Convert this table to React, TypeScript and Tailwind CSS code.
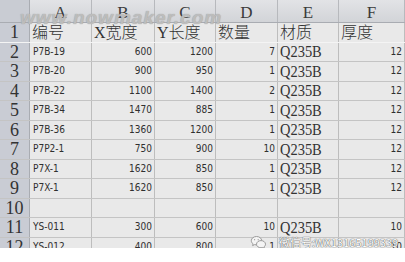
const rows: string[][] = [
  ['P7B-19', '600', '1200', '7', 'Q235B', '12'],
  ['P7B-20', '900', '950', '1', 'Q235B', '12'],
  ['P7B-22', '1100', '1400', '2', 'Q235B', '12'],
  ['P7B-34', '1470', '885', '1', 'Q235B', '12'],
  ['P7B-36', '1360', '1200', '1', 'Q235B', '12'],
  ['P7P2-1', '750', '900', '10', 'Q235B', '12'],
  ['P7X-1', '1620', '850', '1', 'Q235B', '12'],
  ['P7X-1', '1620', '850', '1', 'Q235B', '12'],
  ['', '', '', '', '', ''],
  ['YS-011', '300', '600', '10', 'Q235B', '10'],
  ['YS-012', '400', '800', '1', '', '10'],
];

const widths = ['w-[62px]', 'w-[63px]', 'w-[61px]', 'w-[62px]', 'w-[61px]', 'w-[66px]'];
const letters = ['A', 'B', 'C', 'D', 'E', 'F'];
const titles = ['编号', 'X宽度', 'Y长度', '数量', '材质', '厚度'];

const serif = "font-['Liberation_Serif','Noto_Sans_CJK_SC',serif]";
const narrow = "font-['Liberation_Sans_Narrow','DejaVu_Sans_Condensed','Liberation_Sans',sans-serif]";

const WeChat = () => (
  <svg width="17" height="14" viewBox="0 0 17 14" fill="none" stroke="#9a9a9a" strokeWidth="1">
    <path d="M6.5 1.5c-3 0-5.2 1.9-5.2 4.2 0 1.3.7 2.4 1.8 3.2l-.5 1.7 2-1c.6.2 1.2.3 1.9.3 3 0 5.2-1.9 5.2-4.2S9.5 1.5 6.5 1.5z" fill="#f4f4f4" />
    <path d="M11 5.6c2.5 0 4.5 1.6 4.5 3.6 0 1.1-.6 2-1.5 2.7l.4 1.4-1.7-.8c-.5.2-1.1.3-1.7.3-2.5 0-4.5-1.6-4.5-3.6S8.5 5.6 11 5.6z" fill="#f4f4f4" />
    <circle cx="4.6" cy="4.7" r=".6" fill="#9a9a9a" stroke="none" />
    <circle cx="8.2" cy="4.7" r=".6" fill="#9a9a9a" stroke="none" />
  </svg>
);

export default function App() {
  return (
    <div className="w-[405px] h-[262px] bg-white overflow-hidden">
      <div className="relative h-[248px] overflow-hidden bg-[#e9e9e9] text-[#2a2a2a]">
        {/* column letters */}
        <div className="flex h-[23px] bg-gradient-to-b from-[#e2e3e6] to-[#d2d4d8] border-b border-[#a9acb2]">
          <div className="w-[30px] border-r border-[#a9acb2] bg-[#c9ccd3]" />
          {letters.map((l, i) => (
            <div
              key={l}
              className={`${widths[i]} flex items-end justify-center pb-[1px] border-r border-[#b7b9bd] ${serif} text-[17px] leading-none text-[#3a3a3a]`}
            >
              {l}
            </div>
          ))}
        </div>

        {/* header row */}
        <div className="flex h-[19.5px] border-b border-[#f4f4f4]">
          <div className={`w-[30px] flex items-center justify-center bg-[#c9ccd4] border-r border-[#a9acb2] ${serif} text-[18px] leading-none text-[#333]`}>
            1
          </div>
          {titles.map((t, i) => (
            <div
              key={t}
              className={`${widths[i]} flex items-end pl-[2px] border-r border-[#bdbdbd] ${serif} text-[16px] leading-[18px] font-light text-[#333]`}
            >
              {t}
            </div>
          ))}
        </div>

        {rows.map((r, ri) => (
          <div key={ri} className="flex h-[19.5px] border-b border-[#c4c4c4]">
            <div className={`w-[30px] flex items-center justify-center bg-[#c9ccd4] border-r border-[#a9acb2] ${serif} text-[18px] leading-none text-[#333]`}>
              {ri + 2}
            </div>
            {r.map((v, ci) =>
              ci === 4 ? (
                <div key={ci} className={`${widths[ci]} flex items-center pl-[2px] border-r border-[#bdbdbd] overflow-hidden`}>
                  <span className={`inline-block origin-left scale-x-85 ${serif} text-[17px] leading-none text-[#333]`}>{v}</span>
                </div>
              ) : (
                <div
                  key={ci}
                  className={`${widths[ci]} flex items-center ${ci === 0 ? 'pl-[3px]' : 'justify-end pr-[2px]'} border-r border-[#bdbdbd] ${narrow} text-[10px] leading-none text-[#2f2f2f]`}
                >
                  {v}
                </div>
              )
            )}
          </div>
        ))}

        {/* top watermark */}
        <div className="absolute left-[20px] top-[8px] font-['Liberation_Sans',sans-serif] text-[19px] font-bold italic tracking-[1px] leading-none text-[#c8c8c8]/80 [text-shadow:0_0_1px_#8f8f8f]">
          www.nowmaker.com
        </div>

        {/* bottom watermark */}
        <div className="absolute left-[250px] top-[235px] flex items-center gap-[12px]">
          <WeChat />
          <span className="font-['Noto_Sans_CJK_SC','Liberation_Sans',sans-serif] text-[11px] leading-none text-white [text-shadow:0_0_1px_#555,0_0_1px_#555]">
            微信号:WX13165199339
          </span>
        </div>
      </div>
    </div>
  );
}
